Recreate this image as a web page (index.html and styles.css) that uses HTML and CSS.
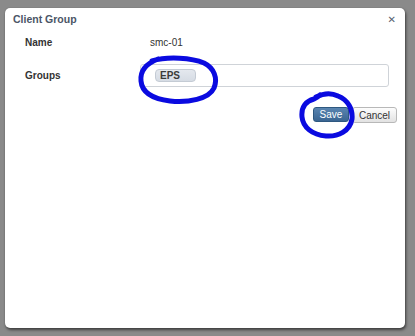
FILE: index.html
```html
<!DOCTYPE html>
<html>
<head>
<meta charset="utf-8">
<link rel="stylesheet" href="styles.css">
</head>
<body>
<div class="dialog">
  <div class="titlebar">
    <span class="title">Client Group</span>
    <span class="close">&#x2715;</span>
  </div>
  <div class="form">
    <div class="row name-row">
      <span class="label">Name</span>
      <span class="value">smc-01</span>
    </div>
    <div class="row groups-row">
      <span class="label">Groups</span>
      <div class="tagbox">
        <span class="chip">EPS</span>
      </div>
    </div>
    <div class="actions">
      <button class="btn save">Save</button>
      <button class="btn cancel">Cancel</button>
    </div>
  </div>
  <svg class="mark mark-eps" width="84" height="52" viewBox="0 0 84 52">
    <path d="M16 7 C32 2 56 4 68 9 C78 14 82 24 78 34 C73 45 52 49 34 47 C18 45 6 39 5 27 C4 17 9 10 22 5" fill="none" stroke="#0a0ae0" stroke-width="5" stroke-linecap="round"/>
  </svg>
  <svg class="mark mark-save" width="58" height="50" viewBox="0 0 58 50">
    <path d="M18 7 C26 3 34 3 40 6 C50 10 55 19 54 29 C52 41 40 47 28 46 C14 45 5 37 4 27 C3 17 8 11 16 9 C18 8 20 7 22 5" fill="none" stroke="#0a0ae0" stroke-width="5" stroke-linecap="round"/>
  </svg>
</div>
</body>
</html>
```

FILE: styles.css
```css
html, body {
  margin: 0;
  padding: 0;
}
body {
  background: #8a8a8a;
  width: 415px;
  height: 336px;
  overflow: hidden;
  padding: 8px 0 0 5px;
  box-sizing: border-box;
  font-family: "Liberation Sans", Arial, sans-serif;
}
.dialog {
  position: relative;
  width: 400px;
  height: 320px;
  background: #ffffff;
  border-radius: 5px;
  box-shadow: 1px 2px 3px rgba(0,0,0,0.55), 0 0 1px rgba(0,0,0,0.3);
  box-sizing: border-box;
}
.titlebar {
  display: flex;
  justify-content: space-between;
  align-items: center;
  height: 22px;
  padding: 0 9px 0 8px;
}
.title {
  font-weight: bold;
  font-size: 10.5px;
  color: #4b5566;
}
.close {
  font-size: 10px;
  font-weight: bold;
  color: #5a6270;
  font-family: "DejaVu Sans", sans-serif;
}
.form {
  padding: 1px 8px 0 20px;
}
.row {
  display: flex;
  align-items: center;
  font-size: 10px;
}
.label {
  flex: none;
  width: 125px;
  font-weight: bold;
  color: #333;
}
.value {
  color: #333;
}
.name-row {
  height: 22px;
}
.groups-row {
  margin-top: 11px;
}
.tagbox {
  flex: none;
  width: 249px;
  height: 23px;
  border: 1px solid #cfd3d8;
  border-radius: 3px;
  box-sizing: border-box;
  display: flex;
  align-items: center;
  margin-left: -10px;
  padding-left: 14px;
}
.chip {
  display: inline-block;
  width: 41px;
  height: 13px;
  line-height: 12px;
  box-sizing: border-box;
  padding-left: 4px;
  background: linear-gradient(#e4e8ee, #d6dce4);
  border: 1px solid #c4cbd4;
  border-radius: 4px;
  font-size: 10px;
  font-weight: bold;
  color: #3a3a3a;
}
.actions {
  display: flex;
  justify-content: flex-end;
  gap: 3px;
  margin-top: 20px;
}
.btn {
  font-family: "Liberation Sans", Arial, sans-serif;
  font-size: 10px;
  height: 15px;
  padding: 0;
  border-radius: 3px;
  box-sizing: border-box;
  cursor: default;
}
.save {
  width: 36px;
  color: #ffffff;
  background: linear-gradient(#5a85b0, #3a6592);
  border: 1px solid #2e5880;
}
.cancel {
  width: 45px;
  height: 16px;
  color: #333;
  background: linear-gradient(#fdfdfd, #e2e2e2);
  border: 1px solid #b8b8b8;
}
.mark {
  position: absolute;
  pointer-events: none;
}
.mark-eps {
  left: 131px;
  top: 46px;
}
.mark-save {
  left: 293px;
  top: 82px;
}
```
